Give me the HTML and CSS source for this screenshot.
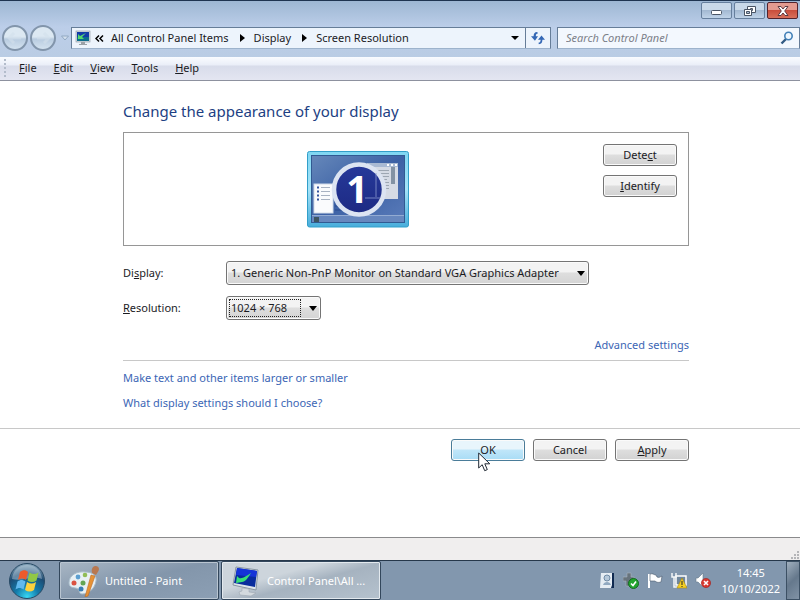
FILE: index.html
```html
<!DOCTYPE html>
<html lang="en">
  <head>
    <meta charset="UTF-8" />
    <meta name="viewport" content="width=device-width, initial-scale=1.0" />
    <title>Screen Resolution</title>
    <link rel="stylesheet" href="styles.css">
  </head>
  <body>
    <div class="window">
      <header class="chrome">
        <div class="title-bar">
          <button class="win-btn" aria-label="Minimize">
            <svg width="14" height="12" viewBox="0 0 14 12"><rect x="1.5" y="5.500" width="10" height="4" rx="1" fill="#fff" stroke="#4a5565" /></svg>
          </button>
          <button class="win-btn" aria-label="Restore">
            <svg width="14" height="12" viewBox="0 0 14 12" fill="#fff" stroke="#4a5565"><path d="M4.500 1.500h8v6h-8z" /><path d="M7.500 3.500h2v2h-2z" /><path d="M1.500 4.500h7v6h-7z" /><path d="M3.500 6.500h3v2h-3z" fill="#a9bdd4" /></svg>
          </button>
          <button class="win-btn close" aria-label="Close">
            <svg width="14" height="12" viewBox="0 0 14 12"><path d="M2 1.500h3L7 4l2-2.500h3L8.700 6l3.300 4.500H9L7 8l-2 2.500H2L5.300 6z" fill="#fff" stroke="#5d3a40" /></svg>
          </button>
        </div>

        <div class="nav-row">
          <div class="nav-buttons">
            <button class="round" aria-label="Back"><svg width="16" height="14" viewBox="0 0 16 14"><path d="M7 2L2 7l5 5M2 7h12" /></svg></button>
            <button class="round" aria-label="Forward"><svg width="16" height="14" viewBox="0 0 16 14"><path d="M9 2l5 5-5 5M14 7H2" /></svg></button>
            <svg class="history" width="8" height="6" viewBox="0 0 8 6"><path d="M.5 1h7L4 5z" fill="#d4e0ee" stroke="#91a8c2" /></svg>
          </div>
          <nav class="address">
            <svg width="16" height="16" viewBox="0 0 16 16">
              <rect x="1" y="1" width="14" height="11" fill="#d7dde3" stroke="#8a949e" stroke-width=".6" />
              <rect x="2" y="2" width="12" height="9" fill="#123aa8" />
              <path d="M2 7h12v4H2z" fill="#0b6d8c" />
              <path d="M3 9V4l2 2 6-3-4 4 2 2z" fill="#55d86c" />
              <path d="M6 12h4v2H6zM4 14h8v1H4z" fill="#9ba2a8" />
            </svg>
            <svg class="chevrons" width="9" height="9" viewBox="0 0 9 9"><path d="M4 1.500l-3 3 3 3M8 1.500l-3 3 3 3" fill="none" stroke="#000" stroke-width="1.500" /></svg>
            <a href="#">All Control Panel Items</a>
            <svg class="sep" width="5" height="8" viewBox="0 0 5 8"><path d="M0 0l5 4-5 4z" /></svg>
            <a href="#">Display</a>
            <svg class="sep" width="5" height="8" viewBox="0 0 5 8"><path d="M0 0l5 4-5 4z" /></svg>
            <a href="#">Screen Resolution</a>
            <button class="drop" aria-label="Previous locations"><svg width="8" height="4" viewBox="0 0 8 4"><path d="M0 0h8L4 4z" /></svg></button>
            <button class="refresh" aria-label="Refresh">
              <svg width="14" height="14" viewBox="0 0 16 16" fill="#3568b5"><path d="M7 1C4 1 3 3 3 6H0l4.500 5L8 6H5.500c0-2 .5-3 2.500-3.500z" /><path d="M9 15c3 0 4-2 4-5h3l-4-5-4 5h3c0 2-.5 3-2.500 3.500z" /></svg>
            </button>
          </nav>
          <form class="search">
            <input type="search" placeholder="Search Control Panel" aria-label="Search Control Panel">
            <svg width="14" height="14" viewBox="0 0 14 14" fill="none"><path d="M1.500 12.500L6 8" stroke="#315b83" stroke-width="2.400" /><circle cx="8.500" cy="5" r="3.700" fill="#eef7ff" stroke="#4280b8" stroke-width="1.600" /></svg>
          </form>
        </div>

        <div class="menu-bar">
          <span class="grip"></span>
          <button><u>F</u>ile</button>
          <button><u>E</u>dit</button>
          <button><u>V</u>iew</button>
          <button><u>T</u>ools</button>
          <button><u>H</u>elp</button>
        </div>
      </header>

      <main>
        <section class="settings">
          <h1>Change the appearance of your display</h1>
          <div class="preview">
            <div class="monitor-area">
              <svg width="102" height="77" viewBox="0 0 102 77">
                <defs>
                  <linearGradient id="frame" x1="0" y1="0" x2="0" y2="1"><stop offset="0" stop-color="#7fd6f2" /><stop offset=".5" stop-color="#a5e3f8" /><stop offset="1" stop-color="#48addb" /></linearGradient>
                  <linearGradient id="desk" x1="0" y1="0" x2="1" y2="1"><stop offset="0" stop-color="#6688ba" /><stop offset=".5" stop-color="#3c61a5" /><stop offset="1" stop-color="#5a7cba" /></linearGradient>
                  <linearGradient id="disc" x1="0" y1="0" x2="0" y2="1"><stop offset="0" stop-color="#26399a" /><stop offset="1" stop-color="#1d2a83" /></linearGradient>
                </defs>
                <rect x=".5" y=".5" width="101" height="75.500" rx="2" fill="url(#frame)" stroke="#329fc9" />
                <rect x="4.500" y="4.500" width="93" height="67" fill="url(#desk)" stroke="#315a92" />
                <path d="M5 65h92v6H5z" fill="#6787be" />
                <path d="M5 64.500h92" stroke="#93abd2" />
                <rect x="7" y="66" width="5" height="5" fill="#3c5461" />
                <rect x="60" y="12" width="31" height="36" fill="#d5dbe5" />
                <path d="M60 12h31v4H60z" fill="#a9bad3" />
                <path d="M80 14h2M84 14h2M88 14h2" stroke="#fff" stroke-width="2" />
                <path d="M70 19.500h12M70 22.500h12M70 25.500h12M70 28.500h10M72 31.500h10M72 34.500h10M72 37.500h10" stroke="#9da7b3" />
                <rect x="84" y="16" width="4" height="17" fill="#8292a4" />
                <rect x="7" y="33" width="19" height="29" fill="#fafbfd" stroke="#d2dcea" />
                <path d="M10 36.500h2M10 40.500h2M10 44.500h2M10 48.500h2" stroke="#34559e" stroke-width="2" />
                <path d="M14 36.500h9M14 40.500h9M14 44.500h9M14 48.500h9" stroke="#a8b2c2" />
                <path d="M28 35h6M28 39h6M28 43h6M28 47h6M28 51h6M28 55h6M28 59h8" stroke="#284b8f" />
                <circle cx="52" cy="38.500" r="25" fill="url(#disc)" stroke="#dce4f2" stroke-width="4.500" />
                <path d="M58 47h15M69 22v24" fill="none" stroke="#8a99cf" stroke-width="2" opacity=".4" />
                <text class="monitor-number" x="50" y="52" text-anchor="middle">1</text>
              </svg>
            </div>
            <div class="preview-buttons">
              <button class="btn">Dete<u>c</u>t</button>
              <button class="btn"><u>I</u>dentify</button>
            </div>
          </div>

          <div class="field">
            <label for="display">Di<u>s</u>play:</label>
            <div class="select">
              <select id="display">
                <option>1. Generic Non-PnP Monitor on Standard VGA Graphics Adapter</option>
              </select>
              <svg width="8" height="5" viewBox="0 0 8 5"><path d="M0 0h8L4 5z" /></svg>
            </div>
          </div>
          <div class="field">
            <label for="resolution"><u>R</u>esolution:</label>
            <div class="select small">
              <select id="resolution">
                <option>1024 × 768</option>
              </select>
              <svg width="8" height="5" viewBox="0 0 8 5"><path d="M0 0h8L4 5z" /></svg>
            </div>
          </div>

          <div class="advanced"><a href="#">Advanced settings</a></div>
          <div class="help-links">
            <a href="#">Make text and other items larger or smaller</a>
            <a href="#">What display settings should I choose?</a>
          </div>
        </section>

        <div class="actions">
          <div class="actions-inner">
            <div class="ok-wrap">
              <button class="btn hot">OK</button>
              <svg class="cursor" width="13" height="20" viewBox="0 0 13 20"><path d="M.7 1v15l3.500-3.300 2.500 6 2.600-1.100-2.500-5.800h5z" fill="#fff" stroke="#222a35" /></svg>
            </div>
            <button class="btn">Cancel</button>
            <button class="btn"><u>A</u>pply</button>
          </div>
        </div>
      </main>

      <div class="status-bar">
        <svg width="8" height="8" viewBox="0 0 8 8" fill="#b5b5b8"><path d="M6 0h2v2H6zM3 3h2v2H3zM6 3h2v2H6zM0 6h2v2H0zM3 6h2v2H3zM6 6h2v2H6z" /></svg>
      </div>
    </div>

    <footer class="taskbar">
      <button class="start" aria-label="Start">
        <svg width="38" height="38" viewBox="0 0 38 38">
          <defs>
            <radialGradient id="orb" cx=".5" cy=".95" r=".95"><stop offset="0" stop-color="#38d8f4" /><stop offset=".35" stop-color="#147cab" /><stop offset=".7" stop-color="#1d4b73" /><stop offset="1" stop-color="#8eabbf" /></radialGradient>
          </defs>
          <circle cx="19" cy="19" r="17.500" fill="url(#orb)" stroke="#284a65" />
          <path d="M4 17C5 8 11 3 19 3s14 5 15 14c-9-4-20 3-30 0z" fill="#d7e7ef" opacity=".4" />
          <path d="M12 10c3-2.500 6-2 8 0l-2 8c-3-2-5-2-8 0z" fill="#ed5a2c" />
          <path d="M21.500 10.500c3 2 6 2 9 0l-2 8c-3 2-6 2-9 0z" fill="#91c746" />
          <path d="M9.500 19.500c3-2 5-2 8 0l-2 8c-3-2-5-2-8 0z" fill="#61b9ee" />
          <path d="M19 20c3 2 6 2 9 0l-2 8c-3 2-6 2-9 0z" fill="#fcd13d" />
        </svg>
      </button>
      <button class="task">
        <svg width="32" height="32" viewBox="0 0 32 32">
          <path d="M1 18C1 10 9 6 17 7c8 0 12 4 11 9-1 7-7 13-14 13-3 0-2-3-4-5s-9 0-9-6z" fill="#e8f0f4" stroke="#a8bdcb" />
          <circle cx="6" cy="18" r="2.500" fill="#db5342" /><circle cx="10" cy="12" r="2.400" fill="#5b9fd1" /><circle cx="17" cy="10" r="2.300" fill="#91bd57" /><circle cx="13" cy="24" r="2.500" fill="#397db4" /><circle cx="15" cy="18" r="2.500" fill="#64a554" />
          <path d="M23 10l4 1-7 20-3 1z" fill="#e79235" stroke="#b96b2b" stroke-width=".6" />
          <path d="M25 2c2-2 6-1 6 2 0 2-2 4-3 6l-4-2c0-2-1-3 1-6z" fill="#b87850" />
        </svg>
        <span>Untitled - Paint</span>
      </button>
      <button class="task active">
        <svg width="32" height="32" viewBox="0 0 32 32">
          <path d="M6 2l22 3-2 20-23-5z" fill="#dce4ea" stroke="#8795a1" />
          <path d="M7 3l20 3-2 16-21-4z" fill="#082c9d" />
          <path d="M7 3l20 3-1 6L6 10z" fill="#1534d8" />
          <path d="M6 18l1-7 2 2c4 1 7-2 12-5-3 5-6 9-9 9z" fill="#39df78" />
          <path d="M12 23l7 1v3l7 1-5 3-11-1-1-3 3-1z" fill="#d3d9de" stroke="#98a3ac" stroke-width=".5" />
        </svg>
        <span>Control Panel\All ...</span>
      </button>

      <div class="tray">
        <svg width="16" height="18" viewBox="0 0 16 18"><path d="M4 1h11v15H3z" fill="#102a51" /><path d="M2 1h11v12l-1 3H1z" fill="#e6edf4" /><circle cx="8" cy="6" r="3" fill="#b5c8da" stroke="#708ba6" /><path d="M4 13c1-4 7-4 8 0z" fill="#91a9c1" /></svg>
        <svg width="16" height="18" viewBox="0 0 16 18"><path d="M4 1h4v4h3v5H7v4H3V9H0V5h4z" fill="#67737d" stroke="#a9b4bd" stroke-width=".6" /><circle cx="10.500" cy="11.500" r="5" fill="#23a52e" stroke="#126d20" /><path d="M8 11.500l2 2 3-4" fill="none" stroke="#fff" stroke-width="1.600" /></svg>
        <svg width="16" height="18" viewBox="0 0 16 18"><path d="M2 2v14" stroke="#fff" stroke-width="2" /><path d="M3 2c3-1 4 1 6 1l1 2c2 1 3 0 5-1l-1 6c-3 1-5 0-6-1H3z" fill="#fff" stroke="#46586b" stroke-width=".6" /></svg>
        <svg width="16" height="18" viewBox="0 0 16 18"><rect x="5" y="4" width="10" height="9" fill="#70879d" stroke="#fff" stroke-width="1.500" /><path d="M1 1v4h4V1M3 5v10h5" fill="none" stroke="#f3f6f8" stroke-width="1.500" /><path d="M11 6l5 10H6z" fill="#f5cf22" stroke="#a9860c" stroke-width=".6" /><path d="M11 9v4M11 14v1" stroke="#222" /></svg>
        <svg width="16" height="18" viewBox="0 0 16 18"><path d="M1 6h2l5-5v14l-5-5H1z" fill="#fff" stroke="#65788c" stroke-width=".6" /><circle cx="11" cy="11" r="4.600" fill="#d83830" stroke="#9d201c" stroke-width=".6" /><path d="M9 9l4 4M13 9l-4 4" stroke="#fff" stroke-width="1.600" /></svg>
      </div>
      <div class="clock"><span>14:45</span><span>10/10/2022</span></div>
      <button class="show-desktop" aria-label="Show desktop"></button>
    </footer>
  </body>
</html>
```

FILE: styles.css
```css
* {
  box-sizing: border-box;
}
body {
  margin: 0;
  min-height: 100vh;
  display: flex;
  flex-direction: column;
  font-family: "Noto Sans", "Open Sans", sans-serif;
  font-size: 11px;
  line-height: 16px;
  color: #1b1b1f;
  background: #fff;
}
button,
input,
select {
  font: inherit;
  color: inherit;
  margin: 0;
  padding: 0;
}
button {
  border: 0;
  background: none;
  white-space: nowrap;
}
a {
  text-decoration: none;
}
svg {
  display: block;
  flex: none;
}
u {
  text-underline-offset: 1px;
}
.window {
  flex: 1;
  display: flex;
  flex-direction: column;
}

/* title bar, address row, menu */
.chrome {
  border-top: 1px solid #1e3450;
  background: linear-gradient(#9db7d3, #bccee9 26px, #b8cbe0);
}
.title-bar {
  display: flex;
  justify-content: flex-end;
  gap: 2px;
  height: 26px;
  padding: 1px 2px 0;
}
.win-btn {
  display: flex;
  align-items: center;
  justify-content: center;
  width: 31px;
  height: 17px;
  border: 1px solid #667f9d;
  border-radius: 2px;
  background: linear-gradient(#c9d9e9 50%, #a3b9d2 50%, #bfd3e8);
}
.win-btn.close {
  border-color: #52232c;
  background: linear-gradient(#e39b90 50%, #c94e3c 50%, #d8705b);
}
.nav-row {
  display: flex;
  height: 30px;
}
.nav-buttons {
  display: flex;
  align-items: center;
  gap: 2px;
  width: 71px;
  height: 22px;
  padding-left: 2px;
}
.round {
  display: flex;
  flex: none;
  align-items: center;
  justify-content: center;
  width: 26px;
  height: 26px;
  border: 2px solid #8295ab;
  border-radius: 50%;
  background: linear-gradient(#dce8f2 45%, #b9cce0 55%, #d3e2ef);
}
.round svg {
  fill: none;
  stroke: #d3e0ec;
  stroke-width: 3;
  opacity: 0.6;
}
.history {
  margin-left: 3px;
}
.address {
  display: flex;
  flex: 1;
  align-items: center;
  height: 22px;
  padding-left: 3px;
  border: 1px solid #667d98;
  border-bottom-color: #9db3cc;
  background: #edf4fc;
}
.address a {
  color: inherit;
  white-space: nowrap;
}
.chevrons {
  margin: 0 7px 0 4px;
}
.sep {
  margin: 0 9px 0 11px;
}
.drop {
  display: flex;
  justify-content: center;
  width: 20px;
  margin-left: auto;
}
.refresh {
  display: flex;
  align-items: center;
  justify-content: center;
  width: 25px;
  height: 20px;
  border-left: 1px solid #667d98;
}
.search {
  display: flex;
  align-items: center;
  width: 243px;
  height: 22px;
  margin-left: 6px;
  padding: 0 5px 0 8px;
  border: 1px solid #667d98;
  border-bottom-color: #9db3cc;
  background: #f3f8fe;
}
.search input {
  flex: 1;
  min-width: 0;
  border: 0;
  outline: 0;
  background: none;
  appearance: none;
}
.search input::placeholder {
  color: #7c8089;
  font-style: italic;
}
.menu-bar {
  display: flex;
  align-items: center;
  gap: 17px;
  height: 24px;
  padding-left: 4px;
  padding-bottom: 2px;
  border-bottom: 1px solid #8d919f;
  background: linear-gradient(#fafcff, #eaeef8 8px, #d8dcea 9px, #e4e6f1);
}
.grip {
  height: 18px;
  margin-right: -4px;
  border-left: 2px dotted #b3bccb;
}

/* content */
main {
  flex: 1;
}
.settings {
  max-width: 689px;
  padding: 20px 0 17px 123px;
}
h1 {
  margin: 0 0 11px;
  font-size: 15px;
  line-height: 20px;
  font-weight: normal;
  color: #1d3f83;
}
.preview {
  display: flex;
  height: 114px;
  padding: 11px;
  margin-bottom: 15px;
  border: 1px solid #969696;
}
.monitor-area {
  display: flex;
  flex: 1;
  align-items: flex-start;
  justify-content: center;
  padding: 7px 22px 0 0;
}
.monitor-number {
  font-size: 38px;
  font-weight: bold;
  fill: #fff;
}
.preview-buttons {
  display: flex;
  flex-direction: column;
  gap: 9px;
}
.btn {
  width: 74px;
  height: 22px;
  border: 1px solid #747474;
  border-radius: 3px;
  background: linear-gradient(#f3f3f3 45%, #dedede 50%, #d2d2d2);
  box-shadow: inset 0 0 0 1px #fafafa;
}
.btn.hot {
  border-color: #4a7c99;
  background: linear-gradient(#e8f5fc 45%, #c0e6f9 50%, #a8dcf5);
}
.field {
  display: flex;
  align-items: center;
  margin-bottom: 11px;
}
.field label {
  width: 103px;
}
.select {
  position: relative;
  width: 363px;
}
.select.small {
  width: 95px;
}
.select select {
  display: block;
  width: 100%;
  height: 24px;
  padding-left: 4px;
  border: 1px solid #747474;
  border-radius: 3px;
  appearance: none;
  background: linear-gradient(#f3f3f3 45%, #dedede 50%, #d4d4d4);
  box-shadow: inset 0 0 0 1px #fafafa;
}
.select svg {
  position: absolute;
  right: 4px;
  top: 10px;
  pointer-events: none;
}
/* focus rectangle around the chosen value */
.select.small::before {
  content: "";
  position: absolute;
  inset: 3px 20px 3px 3px;
  border: 1px dotted #222;
  pointer-events: none;
}
.settings a {
  color: #3c66b5;
}
.advanced {
  padding: 6px 0 7px;
  text-align: right;
  border-bottom: 1px solid #c8c8c8;
}
.help-links {
  display: flex;
  flex-direction: column;
  align-items: flex-start;
  gap: 9px;
  padding-top: 9px;
}
.actions {
  border-top: 1px solid #c8c8c8;
}
.actions-inner {
  display: flex;
  justify-content: flex-end;
  gap: 8px;
  max-width: 689px;
  padding-top: 10px;
}
.ok-wrap {
  position: relative;
}
.cursor {
  position: absolute;
  left: 27px;
  top: 13px;
}
.status-bar {
  display: flex;
  align-items: flex-end;
  justify-content: flex-end;
  height: 23px;
  padding: 1px;
  border-top: 1px solid #8a8a8c;
  background: #f0eeee;
}

/* taskbar */
.taskbar {
  display: flex;
  height: 40px;
  border-top: 1px solid #26384b;
  background: #8297ae;
  color: #fff;
}
.start {
  display: flex;
  align-items: center;
  width: 51px;
  padding-left: 8px;
  margin-right: 8px;
}
.task {
  display: flex;
  align-items: center;
  gap: 5px;
  width: 160px;
  height: 39px;
  margin-right: 2px;
  padding-left: 8px;
  border: 1px solid #33475c;
  border-radius: 2px;
  background: linear-gradient(165deg, #a8b6c4, #8396ab 50%, #8c9fb4);
  box-shadow: inset 0 0 0 1px #b9c5d1;
}
.task.active {
  background: linear-gradient(165deg, #cdd5dc 35%, #a6b3c0 55%, #b5c2ce);
  box-shadow: inset 0 0 0 1px #e3e9ee;
}
.tray {
  display: flex;
  align-items: center;
  gap: 8px;
  margin-left: auto;
}
.clock {
  display: flex;
  flex-direction: column;
  justify-content: center;
  padding: 0 6px 0 10px;
  text-align: center;
}
.show-desktop {
  width: 14px;
  border: 1px solid #3c5064;
  background: linear-gradient(135deg, #a0afbe, #65788c 50%, #8193a6);
}
```
